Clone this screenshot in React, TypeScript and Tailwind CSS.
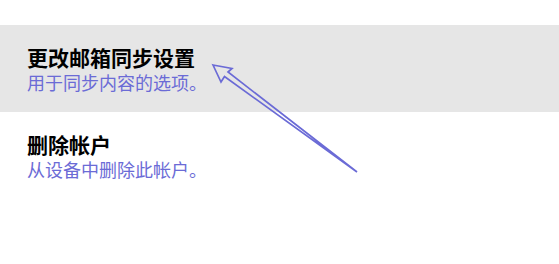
import React from "react";

const items = [
  { title: "更改邮箱同步设置", desc: "用于同步内容的选项。", active: true },
  { title: "删除帐户", desc: "从设备中删除此帐户。", active: false },
];

export default function App() {
  return (
    <div
      className="relative w-[559px] h-[264px] bg-white overflow-hidden"
      style={{ fontFamily: '"Noto Sans CJK SC", "Noto Sans", sans-serif' }}
    >
      <div className="pt-[25px] flex flex-col">
        {items.map((item, idx) => (
          <div
            key={idx}
            className={`px-[27px] pt-[18px] pb-[19px] ${item.active ? "bg-[#e6e6e6]" : ""}`}
          >
            <div className="text-[21px] leading-[28px] font-bold text-black">{item.title}</div>
            <div className="text-[18px] leading-[22px] text-[#6b6bd6]">{item.desc}</div>
          </div>
        ))}
      </div>

      {/* callout arrow */}
      <svg className="absolute left-0 top-0 pointer-events-none" width="559" height="264" viewBox="0 0 559 264">
        <polygon
          points="213,65 232,68.5 228,72 357,172 224.5,76.5 221,82"
          fill="none"
          stroke="#6b6bd6"
          strokeWidth="1.7"
          strokeLinejoin="miter"
        />
      </svg>
    </div>
  );
}
